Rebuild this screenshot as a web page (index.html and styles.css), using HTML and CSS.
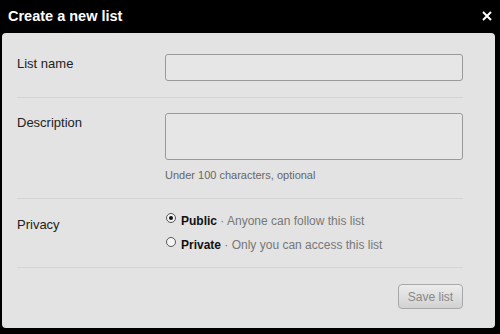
FILE: index.html
```html
<!DOCTYPE html>
<html>

<head>
    <title>Create a new list</title>
    <link rel="stylesheet" href="styles.css">
</head>

<body>
    <div class="dialog">
        <div class="header">
            <h1>Create a new list</h1>
            <span class="close">
                <svg width="10" height="10" viewBox="0 0 10 10">
                    <path d="M1 1 L9 9 M9 1 L1 9" stroke="#fff" stroke-width="2" />
                </svg>
            </span>
        </div>
        <div class="panel">
            <div class="row">
                <label class="label">List name</label>
                <div class="field">
                    <input type="text" class="text-input">
                </div>
            </div>
            <div class="row row-desc">
                <label class="label">Description</label>
                <div class="field">
                    <textarea class="text-area"></textarea>
                    <p class="hint">Under 100 characters, optional</p>
                </div>
            </div>
            <div class="row row-privacy">
                <label class="label">Privacy</label>
                <div class="field">
                    <div class="option">
                        <span class="radio checked"></span>
                        <b>Public</b><span class="sub">&nbsp;&middot; Anyone can follow this list</span>
                    </div>
                    <div class="option">
                        <span class="radio"></span>
                        <b>Private</b><span class="sub">&nbsp;&middot; Only you can access this list</span>
                    </div>
                </div>
            </div>
            <div class="footer">
                <button class="save">Save list</button>
            </div>
        </div>
    </div>
</body>

</html>
```

FILE: styles.css
```css
body {
    margin: 0;
    background-color: black;
    font-family: "Liberation Sans", Arial, sans-serif;
}

.dialog {
    width: 500px;
    height: 334px;
    overflow: hidden;
}

.header {
    display: flex;
    justify-content: space-between;
    align-items: center;
    height: 33px;
    padding: 0 8px 0 8px;
    box-sizing: border-box;
}

.header h1 {
    margin: 0;
    color: white;
    font-size: 14.5px;
    font-weight: bold;
    line-height: 16px;
    padding-bottom: 2px;
}

.close {
    display: flex;
    margin-bottom: 1px;
}

.panel {
    margin: 0 5px 0 2px;
    background-color: #e3e3e3;
    border-radius: 4px;
    padding: 5px 32px 14px 15px;
    height: 295px;
    box-sizing: border-box;
}

.row {
    display: flex;
    padding: 16px 0;
    border-bottom: 1px solid #d4d4d4;
}

.row-desc {
    padding: 15px 0 16px 0;
}

.row-privacy {
    padding: 14px 0 14px 0;
}

.label {
    width: 148px;
    font-size: 13px;
    line-height: 15px;
    color: #222;
    padding-top: 2px;
}

.row-privacy .label {
    padding-top: 4px;
}

.field {
    flex: 1;
}

.text-input,
.text-area {
    display: block;
    width: 100%;
    box-sizing: border-box;
    border: 1px solid #9a9a9a;
    border-radius: 3px;
    background-color: #e6e6e6;
    margin: 0;
    font-family: inherit;
    resize: none;
}

.text-input {
    height: 27px;
}

.text-area {
    height: 47px;
}

.hint {
    margin: 8px 0 0 0;
    font-size: 11px;
    line-height: 14px;
    color: #666;
}

.option {
    display: flex;
    align-items: center;
    font-size: 12px;
    line-height: 16px;
    color: #111;
    height: 16px;
}

.option + .option {
    margin-top: 8px;
}

.option b {
    margin-left: 5px;
}

.sub {
    color: #777;
}

.radio {
    width: 8px;
    height: 8px;
    border: 1px solid #555;
    border-radius: 50%;
    background-color: #f4f4f4;
    position: relative;
    margin-top: -6px;
    margin-left: 1px;
}

.radio.checked::after {
    content: "";
    position: absolute;
    left: 2px;
    top: 2px;
    width: 4px;
    height: 4px;
    border-radius: 50%;
    background-color: #111;
}

.footer {
    display: flex;
    justify-content: flex-end;
    padding: 16px 0 5px 0;
}

.save {
    width: 65px;
    height: 25px;
    border: 1px solid #a8a8a8;
    border-radius: 4px;
    background: linear-gradient(#ececec, #d2d2d2);
    color: #888;
    font-family: inherit;
    font-size: 12px;
    padding: 0;
}
```
